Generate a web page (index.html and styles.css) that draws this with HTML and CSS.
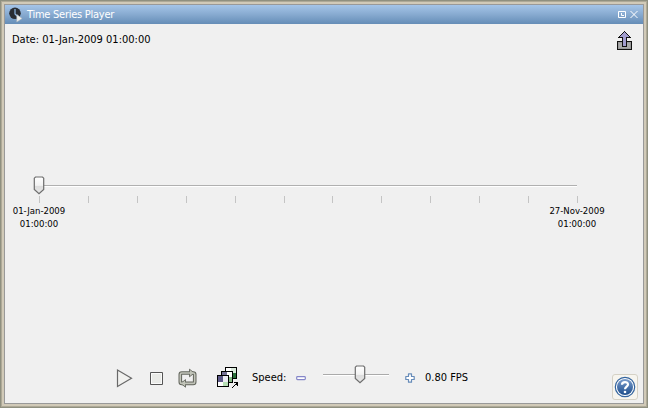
FILE: index.html
```html
<!DOCTYPE html>
<html lang="en">
<head>
<meta charset="utf-8">
<title>Time Series Player</title>
<link rel="stylesheet" href="styles.css">
</head>
<body>
<div class="window">
  <div class="frame">
    <header class="titlebar">
      <svg class="app-icon" width="16" height="16" viewBox="0 0 16 16"><circle cx="6" cy="6.3" r="5.8" fill="#292d33"/><path d="M6 2v5l2 2" fill="none" stroke="#8fb9e5" stroke-width="1.2"/><path d="M7.8 7.5v7.500l5.300-3.500z" fill="#f0f0ed" stroke="#a9b5bd" stroke-width=".6"/></svg>
      <h1>Time Series Player</h1>
      <svg class="window-buttons" width="20" height="9" viewBox="0 0 20 9" fill="none" stroke="#fff"><path d="M.5 1.5h7v6h-7zM3.5 3v2.500H6M12.500 1l7 7M19.500 1l-7 7"/></svg>
    </header>
    <main>
      <div class="top">
        <span class="date">Date: 01-Jan-2009 01:00:00</span>
        <svg class="export" width="16" height="20" viewBox="0 0 16 20" shape-rendering="crispEdges"><path d="M.5 10.500h14v8H.5z" fill="#999" stroke="#111"/><path d="M2 12h11v5H2z" fill="#aaa"/><path d="M7.500.5 13.500 6.500H9.500v9h-4v-9h-4z" fill="#a29dce" stroke="#111"/></svg>
      </div>
      <section class="timeline">
        <div class="rail">
          <svg class="thumb" width="12" height="19" viewBox="0 0 12 19"><defs><linearGradient id="g" x2="0" y2="1"><stop stop-color="#fff"/><stop offset=".5" stop-color="#f2f2f2"/><stop offset=".55" stop-color="#ddd"/><stop offset="1" stop-color="#e8e8e8"/></linearGradient></defs><path d="M2.500 1h7l1.200 1.200v11.300L6 17.800 1.300 13.500V2.200z" fill="url(#g)" stroke="#6d6d6d" stroke-width="1.200"/></svg>
        </div>
        <div class="ticks"><i></i><i></i><i></i><i></i><i></i><i></i><i></i><i></i><i></i><i></i><i></i><i></i></div>
        <div class="labels"><span>01-Jan-2009<br>01:00:00</span><span>27-Nov-2009<br>01:00:00</span></div>
      </section>
      <footer class="controls">
        <svg class="play" width="17" height="20" viewBox="0 0 17 20"><path d="M1.500 2v16.500L15.500 10.200z" fill="#f1f1ef" stroke="#696969" stroke-width="1.200"/></svg>
        <svg class="stop" width="13" height="13" viewBox="0 0 13 13"><path d="M.5.5h12v12H.5z" fill="#e9eae7" stroke="#555"/><path d="M1.500 1.500h10v10h-10z" fill="none" stroke="#fafafa"/></svg>
        <svg class="repeat" width="19" height="20" viewBox="0 0 19 20"><rect x="2.300" y="5" width="14.400" height="10.400" rx="1.500" fill="none" stroke="#62655c" stroke-width="3.600"/><path d="M11.500 1.200v7.600l4.700-3.800zM7.500 11.600v7.600l-4.700-3.800z" fill="#c1c4b9" stroke="#62655c" stroke-width=".9"/><rect x="2.300" y="5" width="14.400" height="10.400" rx="1.500" fill="none" stroke="#c1c4b9" stroke-width="1.600"/></svg>
        <svg class="frames" width="22" height="22" viewBox="0 0 22 22" shape-rendering="crispEdges"><path d="M8.500.5h11v11h-11z" fill="#fff" stroke="#000"/><path d="M14 1h5v5h-5z" fill="#d9eadb"/><path d="M14 6h5v5h-5z" fill="#287038"/><path d="M4.500 4.500h11v11h-11z" fill="#fff" stroke="#000"/><path d="M5 5h5v5H5z" fill="#777397"/><path d="M10 10h5v5h-5z" fill="#87ba87"/><path d="M.5 8.500h11v11H.5z" fill="#fff" stroke="#000"/><path d="M1 9h5v6H1z" fill="#5d5988"/><path d="M6 9h5v6H6z" fill="#ececf4"/><path d="M6 15h5v4H6z" fill="#b7dfb5"/><path d="M15 21l5-4.500M17 15.500h3.500V19" fill="none" stroke="#000"/></svg>
        <span class="speed">Speed:</span>
        <svg class="minus" width="10" height="10" viewBox="0 0 10 10"><rect x=".7" y="3.600" width="8.600" height="3" rx=".8" fill="#fff" stroke="#8586c8" stroke-width="1.200"/></svg>
        <div class="speed-rail">
          <svg class="speed-thumb" width="12" height="19" viewBox="0 0 12 19"><path d="M2.500 1h7l1.200 1.200v11.300L6 17.800 1.300 13.500V2.200z" fill="url(#g)" stroke="#6d6d6d" stroke-width="1.200"/></svg>
        </div>
        <svg class="plus" width="10" height="10" viewBox="0 0 10 10"><path d="M3.500.8h3v2.700h2.700v3H6.500v2.700h-3V6.500H.8v-3h2.700z" fill="#fff" stroke="#668bb8" stroke-width="1.200" stroke-linejoin="round"/></svg>
        <span class="fps">0.80 FPS</span>
        <button class="help" aria-label="Help"><svg width="22" height="22" viewBox="0 0 22 22"><defs><linearGradient id="h" x2="0" y2="1"><stop stop-color="#7b9dcc"/><stop offset="1" stop-color="#1b4c8b"/></linearGradient></defs><circle cx="11" cy="11" r="9.700" fill="#fff" stroke="#34649e" stroke-width="1.200"/><circle cx="11" cy="11" r="8" fill="url(#h)"/><path d="M8 8.700C8 5.200 14 5.200 14 8.600c0 2-3 2.300-3 4.700" fill="none" stroke="#fff" stroke-width="2.200"/><circle cx="11" cy="16" r="1.300" fill="#fff"/></svg></button>
      </footer>
    </main>
  </div>
</div>
</body>
</html>
```
FILE: styles.css
```css
* { box-sizing: border-box; }
body { margin: 0; font: 11px/14px "DejaVu Sans Condensed", "DejaVu Sans", sans-serif; font-stretch: condensed; color: #000; }
svg { display: block; flex: none; }
span { white-space: nowrap; }
.window { width: 648px; height: 408px; border: 1px solid #8f9080; background: #d1cab8; box-shadow: inset 0 0 0 1px #aea997; padding: 3px; }
.frame { height: 400px; border: 1px solid #999; background: #f0f0f0; }
.titlebar { height: 19px; display: flex; align-items: center; padding: 0 5px 0 4px; background: linear-gradient(#a5c5e8, #87aad0 50%, #658db7); }
.app-icon { margin-top: 1px; }
h1 { margin: 0 0 0 2px; color: #fff; font: inherit; letter-spacing: -.26px; }
.window-buttons { margin-left: auto; }
main { height: 379px; display: flex; flex-direction: column; }
.top { height: 154px; display: flex; justify-content: space-between; padding: 7px 10px 0 7px; }
.date { margin-top: 2px; letter-spacing: 0; }
.timeline { height: 186px; padding: 7px 66px 0 34px; }
.rail { position: relative; height: 2px; border-top: 1px solid #b0b0b0; border-bottom: 1px solid #fff; }
.thumb { position: absolute; left: -6px; top: -10px; }
.ticks { height: 7px; margin: 9px -1px 0 0; display: flex; justify-content: space-between; }
.ticks i { width: 1px; background: #c4c4c4; }
.labels { display: flex; justify-content: space-between; margin: 1px -34px 0; font-size: 9.500px; line-height: 13px; text-align: center; }
.labels span { width: 68px; }
.controls { height: 39px; display: flex; align-items: center; padding: 0 5px 11px 111px; }
.stop { margin-left: 17px; }
.repeat { margin-left: 15px; }
.frames { margin-left: 20px; }
.speed { width: 36px; margin-left: 13px; letter-spacing: 0; }
.minus { margin-left: 8px; }
.speed-rail { position: relative; width: 66px; height: 2px; margin: -7px 0 0 17px; border-top: 1px solid #aaa; border-bottom: 1px solid #fff; }
.speed-thumb { position: absolute; left: 31px; top: -10px; }
.plus { margin-left: 16px; }
.fps { margin-left: 10px; letter-spacing: 0; }
.help { width: 26px; height: 26px; margin: 18px 0 0 auto; padding: 1px; border: 1px solid #d5d1c5; border-radius: 3px; background: #f7f5ef; }
```
